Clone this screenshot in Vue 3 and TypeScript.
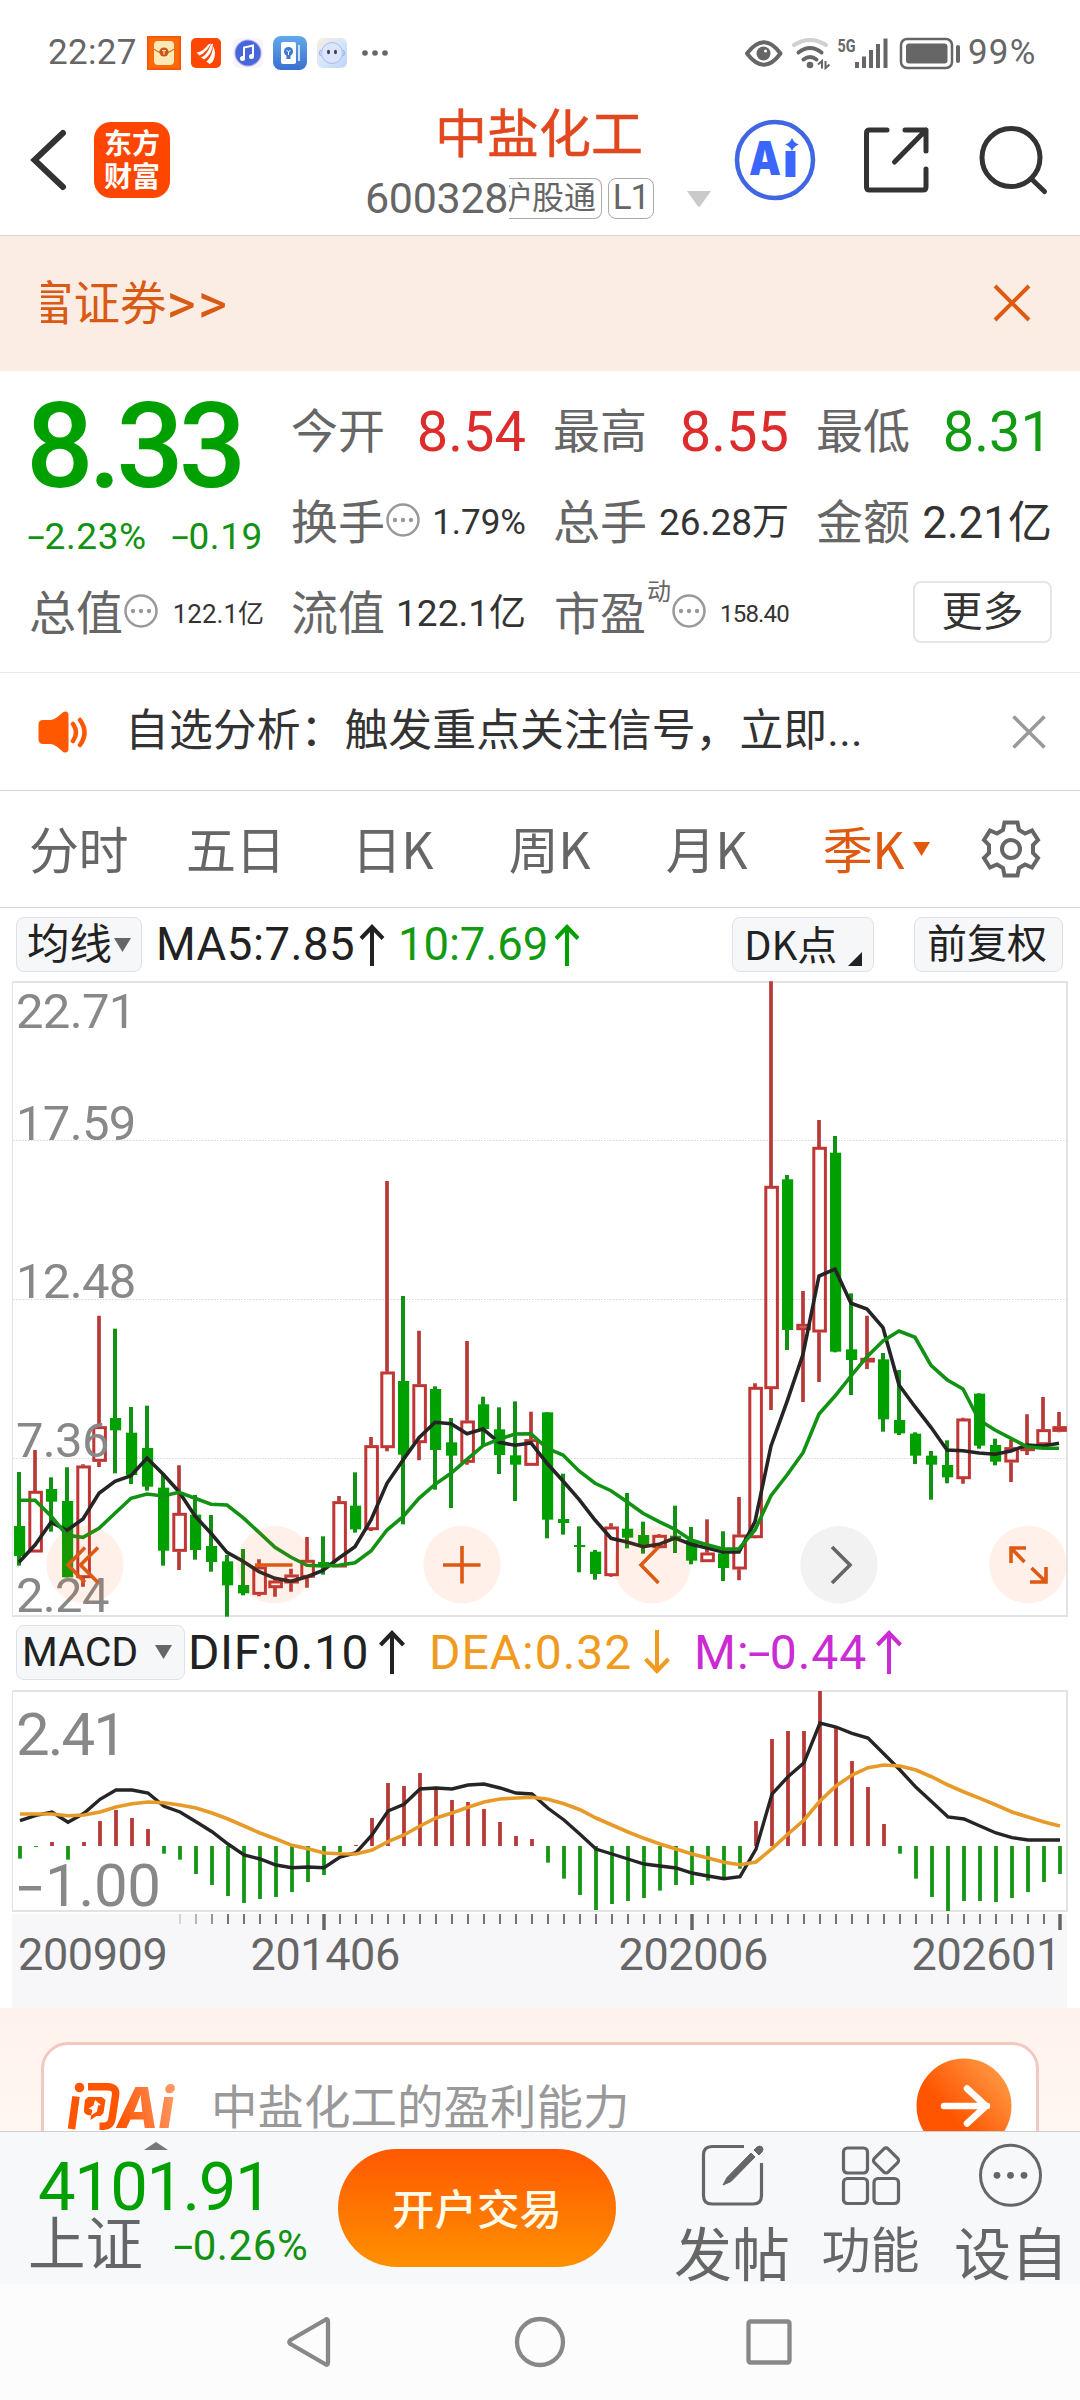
<script setup lang="ts">
type Candle = ['r' | 'g', number, number, number, number]

// colour, high, body top, body bottom, low (thirds of a pixel below the label band)
const candles: Candle[] = [
  ['g', 846, 1008, 1098, 1127], ['r', 780, 903, 1087, 1087], ['g', 862, 897, 935, 1025], ['g', 832, 933, 1162, 1162],
  ['r', 823, 827, 1164, 1190], ['r', 377, 709, 815, 831], ['g', 416, 684, 721, 850], ['g', 651, 728, 855, 882],
  ['g', 647, 774, 890, 902], ['g', 850, 893, 1082, 1127], ['r', 826, 969, 1085, 1140], ['g', 915, 974, 1080, 1109],
  ['g', 975, 1068, 1116, 1145], ['g', 1095, 1114, 1186, 1280], ['g', 1077, 1185, 1210, 1216], ['r', 1108, 1130, 1214, 1219],
  ['r', 1165, 1172, 1194, 1220], ['r', 1136, 1154, 1180, 1205], ['r', 1041, 1110, 1163, 1193], ['g', 1039, 1116, 1130, 1154],
  ['r', 918, 934, 1132, 1132], ['g', 847, 947, 1018, 1028], ['r', 741, 766, 1020, 1023], ['r', -27, 545, 774, 784],
  ['g', 318, 573, 794, 1003], ['r', 422, 583, 759, 811], ['g', 589, 597, 780, 899], ['g', 684, 757, 797, 954],
  ['r', 453, 692, 818, 824], ['g', 620, 643, 717, 765], ['g', 652, 718, 795, 852], ['g', 634, 796, 824, 933],
  ['r', 665, 748, 827, 827], ['g', 667, 667, 989, 1045], ['g', 851, 987, 999, 1034], ['g', 1009, 1065, 1071, 1147],
  ['g', 1080, 1085, 1152, 1169], ['r', 1000, 1010, 1158, 1160], ['g', 909, 1016, 1043, 1075], ['g', 995, 1035, 1065, 1091],
  ['r', 1033, 1035, 1074, 1075], ['g', 947, 1037, 1044, 1089], ['g', 1011, 1050, 1112, 1123], ['r', 988, 1088, 1116, 1116],
  ['g', 1024, 1090, 1134, 1173], ['r', 921, 1034, 1138, 1171], ['r', 580, 591, 1044, 1045], ['r', -626, -12, 597, 660],
  ['g', -45, -32, 420, 480], ['r', 303, 402, 420, 636], ['r', -210, -129, 427, 576], ['g', -162, -112, 485, 487],
  ['g', 310, 478, 510, 615], ['r', 377, 504, 517, 537], ['g', 489, 508, 688, 725], ['g', 540, 690, 730, 735],
  ['g', 727, 731, 797, 822], ['g', 783, 797, 824, 929], ['g', 751, 825, 862, 880], ['r', 683, 686, 867, 881],
  ['g', 610, 611, 767, 776], ['g', 746, 765, 815, 826], ['r', 750, 772, 817, 876], ['r', 673, 772, 783, 795],
  ['r', 621, 718, 765, 768], ['r', 666, 709, 725, 727],
]
const ma5 = [1117, 1065, 997, 1021, 987, 910, 874, 857, 804, 852, 905, 978, 1030, 1087, 1114, 1145, 1165, 1174, 1160, 1141, 1104, 1070, 990, 880, 810, 743, 697, 701, 731, 717, 757, 766, 759, 820, 873, 928, 990, 1045, 1056, 1070, 1063, 1044, 1063, 1074, 1086, 1086, 995, 768, 635, 493, 258, 237, 340, 357, 413, 585, 650, 712, 780, 782, 789, 793, 783, 765, 768, 760]
const ma10 = [931, 931, 978, 1036, 1042, 1015, 970, 925, 912, 918, 907, 925, 943, 945, 983, 1027, 1072, 1102, 1126, 1128, 1126, 1118, 1083, 1020, 980, 925, 883, 850, 808, 767, 748, 732, 731, 775, 795, 843, 880, 902, 935, 970, 995, 1018, 1050, 1064, 1077, 1076, 1020, 917, 855, 788, 672, 618, 558, 500, 453, 423, 442, 526, 569, 597, 690, 720, 745, 770, 775, 775]
const hist = [716, 681, 666, 719, 666, 603, 570, 594, 627, 701, 719, 762, 795, 828, 849, 837, 831, 816, 786, 765, 696, 675, 594, 489, 498, 459, 500, 540, 546, 567, 606, 648, 657, 728, 776, 825, 870, 852, 843, 834, 812, 795, 795, 782, 779, 746, 603, 357, 333, 333, 213, 324, 423, 501, 612, 701, 776, 831, 873, 843, 843, 846, 834, 816, 786, 762]
const dif = [602, 586, 576, 607, 580, 538, 510, 510, 519, 559, 576, 605, 635, 672, 705, 717, 735, 743, 741, 743, 711, 698, 645, 573, 553, 507, 504, 507, 495, 492, 504, 519, 522, 565, 600, 643, 687, 702, 717, 732, 738, 744, 759, 768, 776, 770, 687, 522, 470, 428, 309, 321, 340, 354, 402, 450, 502, 546, 591, 597, 618, 639, 653, 660, 660, 660]
const dea = [582, 582, 582, 587, 585, 576, 561, 551, 546, 548, 555, 564, 579, 597, 618, 639, 657, 676, 686, 699, 701, 702, 690, 665, 645, 618, 594, 579, 562, 546, 537, 534, 532, 538, 551, 569, 594, 615, 636, 655, 672, 687, 702, 714, 727, 734, 726, 686, 642, 600, 543, 498, 465, 443, 435, 438, 450, 471, 495, 516, 535, 555, 576, 591, 606, 618]

const STEP = 16
const ky = (v: number) => 210 + v / 3
const my = (v: number) => v / 3 - 70
const line = (vals: number[], x0: number, y: (v: number) => number) =>
  vals.map((v, i) => `${x0 + i * STEP},${y(v).toFixed(1)}`).join(' ')
const ticks = Array.from({ length: 56 }, (_, k) => {
  const i = k + 10
  return { x: 20 + i * STEP, major: i === 19 || i === 42 || i === 65, o: i === 10 ? 0.25 : i === 11 ? 0.5 : i === 12 ? 0.75 : 1 }
})
const priceLabels = [
  { t: '22.71', y: 47.5 }, { t: '17.59', y: 159.5 }, { t: '12.48', y: 317.5 }, { t: '7.36', y: 477 }, { t: '2.24', y: 632 },
]
const tabs = ['分时', '五日', '日K', '周K', '月K']
</script>

<template>
  <div class="phone">
    <div class="status">
      <span class="clock">22:27</span>
      <svg class="s1" width="34" height="34" viewBox="0 0 34 34"><rect width="34" height="34" fill="#f7560b" /><rect x="2" y="2" width="30" height="30" fill="#fb6a08" /><rect x="7" y="5" width="20" height="24" rx="4" fill="#fde9b8" /><path d="M7 13q10 8 20 0" fill="none" stroke="#dd7c2c" stroke-width="1.6" /><circle cx="17" cy="16" r="4.6" fill="#c8571c" /><path d="M15 14.500h4M17 14.500v4" stroke="#fde9b8" stroke-width="1.2" /></svg>
      <svg class="s2" width="30" height="30" viewBox="0 0 30 30"><rect width="30" height="30" rx="5" fill="#ff4704" /><path d="M5.500 14.500C11 14 14 10 17.500 6.500L20 5.500C17 11 15 14 8.500 17.500zM10 19.500C15 17.500 18 12 19.800 6.500L22 5.500C21.500 12 19 17.500 13 21.500zM15.500 23.500C20 19.500 21.500 14 22 8.500C25 13 24.500 20 21 24.500L18.500 26z" fill="#fff" /></svg>
      <svg class="s3" width="30" height="30" viewBox="0 0 30 30"><rect width="30" height="30" rx="6" fill="#f7f5fc" /><circle cx="15" cy="15" r="13.500" fill="#b9a0f2" /><circle cx="15" cy="15" r="12.500" fill="#4567d8" /><path d="M11 20V9.500l9-2V18" fill="none" stroke="#fff" stroke-width="2" /><circle cx="9.500" cy="20.500" r="2.500" fill="#fff" /><circle cx="18.500" cy="18.500" r="2.500" fill="#fff" /></svg>
      <svg class="s4" width="34" height="34" viewBox="0 0 34 34"><defs><linearGradient id="cardBlue" x2="0" y2="1"><stop stop-color="#63a9ea" /><stop offset="1" stop-color="#3a6fd0" /></linearGradient></defs><rect width="34" height="34" rx="8" fill="url(#cardBlue)" /><rect x="8" y="6" width="15" height="22" rx="2" fill="#fff" /><rect x="25" y="9" width="2" height="16" fill="#cfe2fa" /><circle cx="15.500" cy="15.500" r="4.600" fill="#3f79cf" /><rect x="13.500" y="19" width="4" height="4" fill="#3f79cf" /><path d="M13.500 14l2 2 2-2M15.500 16v3" fill="none" stroke="#fff" stroke-width="1" /></svg>
      <svg class="s5" width="30" height="30" viewBox="0 0 30 30"><defs><linearGradient id="face" x2="1" y2="1"><stop stop-color="#fbeedd" /><stop offset=".5" stop-color="#d7e6fa" /><stop offset="1" stop-color="#bcd3fa" /></linearGradient></defs><rect width="30" height="30" rx="6" fill="url(#face)" /><circle cx="15" cy="15" r="10.500" fill="#dce6fb" stroke="#a9bdee" /><path d="M4 12q-3 3 0 6M26 12q3 3 0 6" fill="none" stroke="#9fbdf3" stroke-width="1.5" /><ellipse cx="11.500" cy="14" rx="1.500" ry="2.300" fill="#4d3d50" /><ellipse cx="18.500" cy="14" rx="1.500" ry="2.300" fill="#4d3d50" /></svg>
      <svg class="dots" width="28" height="8" viewBox="0 0 28 8" fill="#666"><circle cx="4" cy="4" r="2.800" /><circle cx="14" cy="4" r="2.800" /><circle cx="24" cy="4" r="2.800" /></svg>
      <svg class="sys" width="220" height="36" viewBox="744 34 220 36" fill="none" stroke="#666">
        <path d="M747 52.500Q764 30 780.500 52.500Q764 75 747 52.500Z" stroke-width="4" stroke-linejoin="round" />
        <circle cx="763.500" cy="52.500" r="7" fill="#666" stroke="none" /><circle cx="765.500" cy="50" r="1.500" fill="#fff" stroke="none" />
        <path d="M794 44Q810 34 826 44" stroke="#d0d0d0" stroke-width="4" stroke-linecap="round" />
        <path d="M798.500 51.500Q810 42.500 821.500 51.500" stroke-width="4" stroke-linecap="round" />
        <path d="M803.500 58.500Q810 53.500 816.500 58.500" stroke-width="4" stroke-linecap="round" />
        <circle cx="810" cy="64" r="3.300" fill="#666" stroke="none" />
        <path d="M818 63.500l4-3.500v7.500M825.500 60v7l4-3.500" stroke-width="2" />
        <text x="837.500" y="51" textLength="18" lengthAdjust="spacingAndGlyphs" class="g5">5G</text>
        <path d="M857 61v6M864 55.500v11.500M871 49v18M878 43v24M885.500 37.500v29.500" stroke-width="4" />
        <rect x="901" y="38" width="51" height="29" rx="6" stroke-width="2.500" /><rect x="906" y="42.500" width="41.500" height="20" rx="3" fill="#666" stroke="none" />
        <path d="M958 46v14" stroke-width="4" stroke-linecap="round" />
      </svg>
      <span class="pct">99%</span>
    </div>

    <header class="head">
      <svg class="back" width="42" height="66" viewBox="28 127 42 66"><path d="M63 133L34.500 160L63 187" fill="none" stroke="#333" stroke-width="6" stroke-linecap="round" /></svg>
      <div class="logo"><span>东方</span><span>财富</span></div>
      <div class="title-col">
        <div class="title">中盐化工</div>
        <div class="sub">
          <span class="code">600328</span>
          <span class="badge hgt"><i>沪股通</i></span>
          <span class="badge l1">L1</span>
          <svg class="tri" width="24" height="16" viewBox="0 0 24 16"><path d="M0 0h24L13 15.500h-2z" fill="#cacaca" /></svg>
        </div>
      </div>
      <svg width="82" height="82" viewBox="734 119 82 82"><circle cx="775" cy="160" r="38" fill="#fff" stroke="#4166e4" stroke-width="4.500" /><text class="ait" x="749" y="175" textLength="32" lengthAdjust="spacingAndGlyphs">A</text><text class="ait" x="783" y="177" textLength="15" lengthAdjust="spacingAndGlyphs">ı</text><path d="M792 138q2 5 7 6.500-5 1.500-7 6.500-2-5-7-6.500 5-1.500 7-6.500z" fill="#3a66fb" /></svg>
      <svg class="share" width="72" height="72" viewBox="861 124 72 72" fill="none" stroke="#333" stroke-width="5" stroke-linecap="round" stroke-linejoin="round"><path d="M887 130H869.500Q866.500 130 866.500 133V187Q866.500 190 869.500 190H923Q926 190 926 187V169M905 130h21v21M926 130L894.500 162" /></svg>
      <svg class="search" width="72" height="72" viewBox="977 123 72 72" fill="none" stroke="#333" stroke-width="5" stroke-linecap="round"><circle cx="1011" cy="156.500" r="29" /><path d="M1031.500 178l13 12.500" /></svg>
    </header>

    <div class="banner">
      <div class="banner-clip"><span>富证券</span><b>&gt;&gt;</b></div>
      <svg width="38" height="38" viewBox="0 0 38 38"><path d="M2 2l34 34M36 2L2 36" stroke="#de5a10" stroke-width="4" /></svg>
    </div>

    <section class="quote">
      <div class="price"><div class="big">8.33</div><div class="chg"><span><i class="dash">-</i>2.23%</span><span class="r"><i class="dash">-</i>0.19</span></div></div>
      <div class="cell"><span>今开</span><b class="v56 red">8.54</b></div>
      <div class="cell"><span>最高</span><b class="v56 red">8.55</b></div>
      <div class="cell"><span>最低</span><b class="v56 grn">8.31</b></div>
      <div class="cell"><span>换手</span><svg class="info" width="34" height="34" viewBox="0 0 34 34"><circle cx="17" cy="17" r="15.500" fill="none" stroke="#999" stroke-width="2.500" /><g fill="#999"><circle cx="9" cy="17" r="2.200" /><circle cx="17" cy="17" r="2.200" /><circle cx="25" cy="17" r="2.200" /></g></svg><b class="v35">1.79%</b></div>
      <div class="cell"><span>总手</span><b class="v37">26.28万</b></div>
      <div class="cell"><span>金额</span><b class="v44">2.21亿</b></div>
      <div class="cell"><span>总值</span><svg class="info" width="34" height="34" viewBox="0 0 34 34"><circle cx="17" cy="17" r="15.500" fill="none" stroke="#999" stroke-width="2.500" /><g fill="#999"><circle cx="9" cy="17" r="2.200" /><circle cx="17" cy="17" r="2.200" /><circle cx="25" cy="17" r="2.200" /></g></svg><b class="v26">122.1亿</b></div>
      <div class="cell"><span>流值</span><b class="v37">122.1亿</b></div>
      <div class="cell"><span class="pe">市盈</span><em>动</em><svg class="info" width="34" height="34" viewBox="0 0 34 34"><circle cx="17" cy="17" r="15.500" fill="none" stroke="#999" stroke-width="2.500" /><g fill="#999"><circle cx="9" cy="17" r="2.200" /><circle cx="17" cy="17" r="2.200" /><circle cx="25" cy="17" r="2.200" /></g></svg><b class="v24">158.40</b></div>
      <div class="cell"><button class="more">更多</button></div>
    </section>

    <div class="notice">
      <svg width="52" height="44" viewBox="36 708 52 44"><path d="M43 718h8q5-1 11-7 2-2 4-1.500 2.500.5 2.500 4v33q0 3.500-2.500 4-2 .5-4-1.500-6-6-11-7h-8q-4.500 0-4.500-5v-14q0-5 4.500-5z" fill="#ff5800" /><path d="M73 722q6 8.500 0 17M80 718q9 12.500 0 25" fill="none" stroke="#ff5800" stroke-width="4.500" stroke-linecap="round" /></svg>
      <span>自选分析：触发重点关注信号，立即<u>...</u></span>
      <svg class="nx" width="34" height="34" viewBox="0 0 34 34"><path d="M1.500 1.500l31 31M32.500 1.500l-31 31" stroke="#999" stroke-width="3.500" /></svg>
    </div>

    <nav class="tabs">
      <span v-for="t in tabs" :key="t" class="tab">{{ t }}</span>
      <span class="tab on">季K</span>
      <svg class="tabtri" width="17" height="14" viewBox="0 0 17 14"><path d="M0 0h17L8.500 14z" fill="#e4560a" /></svg>
      <svg class="gear" width="60" height="60" viewBox="-30 -30 60 60" fill="none" stroke="#666" stroke-width="4" stroke-linejoin="miter"><path d="M-6.500-26.500h13l1.500 7.500 6 3.500 7-3 6 9.500-5 5v8l5 5-6 9.500-7-3-6 3.500-1.500 7.500h-13l-1.500-7.500-6-3.500-7 3-6-9.500 5-5v-8l-5-5 6-9.500 7 3 6-3.500z" /><circle r="9" /></svg>
    </nav>

    <div class="ind">
      <div class="btn b1"><span>均线</span><svg width="17" height="14" viewBox="0 0 17 14"><path d="M0 0h17L8.500 14z" fill="#666" /></svg></div>
      <span class="n m5">MA5:7.85</span>
      <svg class="a1" width="26" height="42" viewBox="0 0 26 42"><path d="M13 42V3M2 14.500L13 3l11 11.500" /></svg>
      <span class="n m10">10:7.69</span>
      <svg class="a2" width="26" height="42" viewBox="0 0 26 42"><path d="M13 42V3M2 14.500L13 3l11 11.500" /></svg>
      <div class="btn b2"><span>DK点</span><svg width="14" height="14" viewBox="0 0 14 14"><path d="M14 0v14H0z" fill="#222" /></svg></div>
      <div class="btn b3">前复权</div>
    </div>

    <svg class="chart" width="1080" height="640" viewBox="0 0 1080 640">
      <path d="M12.500 1V636" stroke="#e3e3e3" stroke-width="1" /><path d="M12 2H1067V636H12" fill="none" stroke="#e3e3e3" stroke-width="2" />
      <path d="M13 160.500H1067M13 319.500H1067M13 478.500H1067" stroke="#d8d8d8" stroke-dasharray="1.500 1.500" />
      <g v-for="(c, i) in candles" :key="i">
        <template v-if="c[0] === 'g'">
          <path :d="`M${19 + i * 16} ${ky(c[1])}V${ky(c[4])}`" stroke="#129212" stroke-width="4" />
          <rect :x="14 + i * 16" :y="ky(c[2])" width="11.200" :height="ky(c[3]) - ky(c[2])" fill="#00a000" />
        </template>
        <template v-else>
          <path :d="`M${19 + i * 16} ${ky(c[1])}V${ky(c[2])}M${19 + i * 16} ${ky(c[3])}V${ky(c[4])}`" stroke="#b83a38" stroke-width="3.700" />
          <rect :x="13.800 + i * 16" :y="ky(c[2]) + 1.300" width="11.600" :height="Math.max(1, ky(c[3]) - ky(c[2]) - 2.600)" fill="none" stroke="#c03634" stroke-width="3" />
        </template>
      </g>
      <polyline :points="line(ma5, 19, ky)" fill="none" stroke="#252525" stroke-width="3.600" />
      <polyline :points="line(ma10, 19, ky)" fill="none" stroke="#129212" stroke-width="3.600" />
      <text v-for="l in priceLabels" :key="l.t" x="16" :y="l.y" class="pl">{{ l.t }}</text>
      <g fill="#ff5a14" fill-opacity=".09"><circle cx="85" cy="584.700" r="38.700" /><circle cx="275" cy="584.700" r="38.700" /><circle cx="462" cy="584.700" r="38.700" /><circle cx="652" cy="584.700" r="38.700" /><path d="M1066 577A38.700 38.700 0 1 0 1066 592z" /></g>
      <circle cx="839" cy="584.700" r="38.700" fill="#f2f2f2" />
      <g fill="none" stroke="#dc5a12" stroke-width="3.600">
        <path d="M85 567.500l-17 17.500 17 17.500M98 567.500l-17.500 17.500 17.500 17.500" /><path d="M255 585h37.500M443 585h37.500M462 566v37.500" /><path d="M658.500 567l-17.500 18 17.500 18" />
        <path d="M1026 568h-15v15M1011 568l13.500 14M1030 602h16v-15M1046 602l-14.500-14" />
      </g>
      <path d="M832 567l18 18-18 18" fill="none" stroke="#666" stroke-width="3.600" />
    </svg>

    <div class="ind ind2">
      <div class="btn b4"><span>MACD</span><svg width="17" height="14" viewBox="0 0 17 14"><path d="M0 0h17L8.500 14z" fill="#666" /></svg></div>
      <span class="n d1">DIF:0.10</span>
      <svg class="c1" width="26" height="44" viewBox="0 0 26 44"><path d="M13 44V3M1.500 15L13 3l11.500 12" /></svg>
      <span class="n d2">DEA:0.32</span>
      <svg class="c2" width="26" height="44" viewBox="0 0 26 44"><path d="M13 0V41M1.500 29L13 41l11.500-12" /></svg>
      <span class="n d3">M:<i class="dash">-</i>0.44</span>
      <svg class="c3" width="26" height="44" viewBox="0 0 26 44"><path d="M13 44V3M1.500 15L13 3l11.500 12" /></svg>
    </div>

    <svg class="macd" width="1080" height="318" viewBox="0 0 1080 318">
      <defs><clipPath id="plot"><rect x="12" y="0" width="1056" height="222" /></clipPath></defs>
      <rect x="12" y="224" width="1055" height="94" fill="#f7f7f9" />
      <path d="M12.500 0V222" stroke="#e3e3e3" stroke-width="1" /><path d="M12 1H1067V221H12" fill="none" stroke="#e3e3e3" stroke-width="2" />
      <g clip-path="url(#plot)">
        <path v-for="(h, i) in hist" :key="i" :d="`M${20 + i * 16} 156V${my(h)}`" :stroke="h < 678 ? '#b83a38' : '#169616'" stroke-width="3.800" />
        <polyline :points="line(dif, 20, my)" fill="none" stroke="#252525" stroke-width="3.400" />
        <polyline :points="line(dea, 20, my)" fill="none" stroke="#e89a28" stroke-width="3.600" />
      </g>
      <text x="16" y="65" class="ml" textLength="111" lengthAdjust="spacing">2.41</text>
      <rect x="19" y="196" width="22" height="4.500" fill="#888" />
      <text x="45" y="216" class="ml" textLength="116" lengthAdjust="spacing">1.00</text>
      <path v-for="t in ticks" :key="t.x" :d="`M${t.x} 224v${t.major ? 16 : 10}`" stroke="#666" :stroke-width="t.major ? 3.500 : 1.800" :opacity="t.o" />
      <g class="dt"><text x="18" y="280">200909</text><text x="250.500" y="280">201406</text><text x="618.500" y="280">202006</text><text x="911.500" y="280">202601</text></g>
    </svg>

    <section class="ask">
      <div class="card">
        <svg class="asklogo" width="116" height="50" viewBox="66 2082 116 50">
          <defs><linearGradient id="ai" x1="0" x2="1" y1=".6" y2=".3"><stop stop-color="#ff5200" /><stop offset="1" stop-color="#ff9a66" /></linearGradient></defs>
          <path d="M76 2096.500L71.500 2129M88 2086.800h19.500q9.500 0 8 9l-3.500 23q-1.200 7.500-8.500 7.500h-4" fill="none" stroke="#ff5500" stroke-width="7.500" />
          <circle cx="79.500" cy="2087.500" r="4.800" fill="#ff5500" />
          <path d="M88 2097h14l3.500 3-2 13-3 3h-4l-6 4 .5-4.500q-8-.5-7-6.500l1-9z" fill="#ff5500" />
          <path d="M95 2100l6 5-3 .5-1 6-6 4 1.500-5.500-4-1.500 5-3z" fill="#fff" />
          <text x="117" y="2127.500" class="aitext" textLength="57" lengthAdjust="spacingAndGlyphs" fill="url(#ai)">Ai</text>
        </svg>
        <span class="q">中盐化工的盈利能力</span>
        <svg class="go" width="96" height="96" viewBox="0 0 96 96"><defs><linearGradient id="go" x1=".2" y1=".7" x2=".9" y2=".1"><stop offset=".2" stop-color="#ff5500" /><stop offset="1" stop-color="#ff9a45" /></linearGradient></defs><circle cx="48" cy="48" r="47.500" fill="url(#go)" /><path d="M28 48h43M51 30.500L70 48 51 65.500" fill="none" stroke="#fff" stroke-width="6.500" stroke-linecap="round" stroke-linejoin="round" /></svg>
      </div>
    </section>

    <footer class="foot">
      <div class="idx">
        <svg width="24" height="8" viewBox="0 0 24 8"><path d="M12 0l12 8H0z" fill="#77777b" /></svg>
        <div class="iv">4101.91</div>
        <div class="ir"><span>上证</span><b><i class="dash">-</i>0.26%</b></div>
      </div>
      <button class="open">开户交易</button>
      <div class="act w1"><svg width="64" height="64" viewBox="700 2143 64 64" fill="none" stroke="#666"><path d="M744 2146.500H712Q703.500 2146.500 703.500 2155V2195.500Q703.500 2204 712 2204H753Q761.500 2204 761.500 2195.500V2163" stroke-width="3.200" /><path d="M751 2153L727 2177.500l-4 7.500 8-3.500 24-24.500zM754 2150l3-3q3-2 5 0 2 2 0 5l-3 3z" fill="#666" stroke-width="1" /></svg><span>发帖</span></div>
      <div class="act w2"><svg width="64" height="64" viewBox="840 2143 64 64" fill="none" stroke="#666" stroke-width="3.200"><rect x="844.500" y="2148" width="24" height="25" rx="4" /><rect x="844.500" y="2178.500" width="24" height="25" rx="4" /><rect x="875" y="2178.500" width="24.500" height="25" rx="4" /><rect x="877.200" y="2150.700" width="19.500" height="19.500" rx="3" transform="rotate(45 887 2160.500)" /></svg><span>功能</span></div>
      <div class="act w3"><svg width="66" height="64" viewBox="978 2143 66 64"><circle cx="1010.500" cy="2175.300" r="30" fill="none" stroke="#666" stroke-width="3" /><g fill="#666"><circle cx="997" cy="2175.300" r="3.400" /><circle cx="1010.500" cy="2175.300" r="3.400" /><circle cx="1024" cy="2175.300" r="3.400" /></g></svg><span>设自</span></div>
    </footer>

    <svg class="navbar" width="1080" height="116" viewBox="0 2284 1080 116" fill="none" stroke="#888" stroke-width="4.300" stroke-linejoin="round"><path d="M328 2321.500V2362.500Q328 2366 325 2364L290.500 2344Q288 2342 290.500 2340L325 2320Q328 2318 328 2321.500Z" /><circle cx="540" cy="2342" r="23" /><rect x="748.500" y="2321.500" width="41" height="41" rx="2" /></svg>
  </div>
</template>

<style>
body { margin: 0; background: #fff; }
</style>

<style scoped>
.phone { width: 1080px; height: 2400px; overflow: hidden; background: #fff; font-family: Roboto, "Noto Sans CJK SC", sans-serif; color: #333; display: flex; flex-direction: column; }
.phone > * { flex: none; box-sizing: border-box; }
svg { display: block; flex: none; }
b, i, em, u { font-weight: 400; font-style: normal; text-decoration: none; }
button { font-family: inherit; padding: 0; }
.dash { display: inline-block; width: .42em; text-align: center; transform: scaleX(1.7); }

.status { height: 105px; display: flex; align-items: center; color: #666; font-size: 35px; line-height: 40px; }
.clock { margin-left: 48px; width: 99px; letter-spacing: .3px; }
.s2 { margin-left: 10px; } .s3 { margin-left: 12px; } .s4 { margin-left: 10px; } .s5 { margin-left: 10px; }
.dots { margin-left: 14px; }
.sys { margin-left: 355px; }
.g5 { font: 700 19px Roboto, sans-serif; fill: #666; stroke: none; }
.pct { margin-left: 4px; letter-spacing: 1.2px; }

.head { height: 131px; border-bottom: 1px solid #d5d5d8; display: flex; align-items: center; padding-bottom: 20px; }
.back { margin-left: 28px; }
.logo { margin-left: 24px; width: 76px; height: 76px; border-radius: 17px; background: #ff4600; color: #fff; display: flex; flex-direction: column; align-items: center; justify-content: center; font: 700 28px/33px "Noto Sans CJK SC", sans-serif; padding-bottom: 3px; box-sizing: border-box; }
.title-col { align-self: flex-start; margin-left: 195px; width: 369px; }
.title { padding-left: 70px; padding-top: 3px; font-size: 52px; line-height: 56px; color: #e2481f; -webkit-text-stroke: .5px #e2481f; }
.sub { display: flex; align-items: center; height: 41px; margin-top: 14px; color: #666; }
.code { width: 144px; font-size: 43px; line-height: 41px; letter-spacing: -.3px; }
.badge { box-sizing: border-box; height: 41px; border: 1.5px solid #aaa; border-radius: 8px; overflow: hidden; font-size: 32px; line-height: 38px; white-space: nowrap; }
.hgt { width: 93px; border-left: 0; border-radius: 0 8px 8px 0; }
.hgt i { display: block; margin-left: -9px; width: 96px; }
.l1 { margin-left: 6px; width: 46px; font-size: 35px; text-align: center; letter-spacing: -1px; }
.tri { margin-left: 33px; }
.ait { font: 900 47px Inter, sans-serif; fill: #3a66fb; }
.share { margin-left: 45px; } .search { margin-left: 44px; }

.banner { height: 135px; background: #fcede4; display: flex; align-items: center; justify-content: space-between; padding: 0 49px 0 41px; color: #d95a12; font-size: 46.500px; line-height: 60px; }
.banner svg { margin-top: -2px; }
.banner-clip { overflow: hidden; display: flex; width: 300px; }
.banner-clip span { margin-left: -14px; }
.banner-clip b { letter-spacing: 2px; font-size: 56px; }

.quote { height: 302px; border-bottom: 1px solid #eaeaea; display: grid; grid-template: repeat(3, 91px) / 234px 234px 235px 235px; column-gap: 28px; padding: 15px 0 0 29px; }
.price { grid-row: 1 / 3; color: #00a000; }
.big { font-size: 119px; line-height: 88px; font-weight: 500; letter-spacing: -5.200px; margin: 17px 0 0 -3px; }
.chg { display: flex; justify-content: space-between; font-size: 37px; line-height: 40px; margin-top: 26px; color: #129212; white-space: nowrap; letter-spacing: .6px; }
.cell { display: flex; align-items: center; white-space: nowrap; }
.cell span { font-size: 47px; line-height: 60px; color: #666; }
.cell b { margin-left: auto; line-height: 60px; margin-right: -1px; }
.info { margin: -6px 0 0 1px; }
.v56 { font-size: 56px; } .v35 { font-size: 35px; } .v37 { font-size: 37px; } .v44 { font-size: 44px; } .v26 { font-size: 26px; } .v24 { font-size: 24px; letter-spacing: -.8px; }
.red { color: #dc2c2c; } .grn { color: #129a12; }
.cell .pe { font-size: 46px; margin-left: 1px; }
.cell em { font-size: 24px; line-height: 30px; margin: -44px 0 0 1px; color: #666; }
.more { margin-left: auto; width: 139px; height: 62px; background: #fff; border: 2px solid #e6e6e6; border-radius: 8px; font-size: 41px; line-height: 54px; color: #333; margin-right: -1px; margin-top: -4px; }

.notice { height: 118px; border-bottom: 1px solid #d5d5d8; display: flex; align-items: center; padding-left: 36px; }
.notice span { margin: -2px 0 0 37px; width: 887px; font-size: 43.900px; line-height: 60px; white-space: nowrap; }
.notice u { letter-spacing: .3px; }

.tabs { height: 117px; border-bottom: 1px solid #d5d5d8; display: flex; align-items: center; color: #666; font: 50px/60px "Noto Sans CJK SC", sans-serif; }
.tab { width: 157px; text-align: center; margin-top: -4px; }
.tabs .tab { letter-spacing: -.4px; }
.on { color: #de5a10; }
.tabtri { margin-left: -29px; }
.gear { margin-left: 51px; }

.ind { height: 72px; display: flex; align-items: center; color: #222; font-size: 45.500px; line-height: 55px; white-space: nowrap; padding-top: 1px; }
.btn { box-sizing: border-box; height: 55px; border: 1.500px solid #dfe1e4; border-radius: 8px; background: #f6f7f9; display: flex; align-items: center; line-height: 52px; }
.b1 { margin-left: 16px; width: 126px; padding-left: 10px; font-size: 42.500px; } .b1 svg { margin-left: 2px; }
.m5 { margin-left: 14px; width: 203px; letter-spacing: .5px; }
.ind > svg { fill: none; stroke: currentColor; stroke-width: 4; }
.m10 { margin-left: 13px; width: 157px; letter-spacing: -.1px; color: #129a12; }
.ind .a2 { margin-left: -1px; color: #00a000; }
.b2 { margin-left: 152px; width: 142px; padding-left: 11px; font: 40px/52px "Noto Sans CJK SC", sans-serif; } .b2 span { margin-top: -3px; } .b2 svg { margin: 28px 0 0 11px; }
.b3 { margin-left: 40px; width: 149px; justify-content: center; font-size: 40px; padding-right: 3px; }
.chart { height: 640px; }
.pl { font-size: 49px; fill: #888; letter-spacing: -.7px; }

.ind2 { height: 70px; font-size: 48px; padding: 0 0 6px; }
.b4 { margin-left: 16px; width: 169px; padding-left: 5px; font-size: 41px; } .b4 svg { margin-left: 17px; }
.d1 { margin-left: 3px; width: 191px; letter-spacing: .6px; }
.d2 { margin-left: 24px; width: 215px; letter-spacing: 1px; color: #f09a1e; } .c2 { color: #f09a1e; }
.d3 { margin-left: 24px; width: 182px; letter-spacing: 1px; color: #cb2bd4; } .c3 { color: #cb2bd4; }
.ml { font-size: 60px; fill: #888; }
.dt { font-size: 45px; fill: #666; letter-spacing: -.4px; }

.ask { height: 123px; overflow: hidden; background: linear-gradient(#fff2ed, #fff7f2); padding: 34px 41px 0; }
.card { box-sizing: border-box; height: 180px; border: 3px solid #f3c8c0; border-radius: 27px; background: #fff; display: flex; align-items: flex-start; }
.asklogo { margin: 37px 0 0 22px; }
.aitext { font: italic 800 57px Inter, sans-serif; }
.q { margin: 30px 0 0 29px; font-size: 46.500px; line-height: 66px; color: #999; width: 705px; }
.go { margin-top: 13px; }

.foot { height: 153px; overflow: hidden; border-top: 1px solid #cfcfd2; background: #f7f8fa; display: flex; align-items: flex-start; color: #666; white-space: nowrap; }
.idx { width: 338px; }
.idx svg { margin: 10px 0 0 144px; }
.iv { margin: 7px 0 0 38px; font-size: 67px; line-height: 60px; letter-spacing: -1.500px; color: #00a000; }
.ir { display: flex; align-items: center; margin: -3px 0 0 28px; font-size: 57.500px; line-height: 64px; }
.ir b { font-size: 42px; color: #129212; margin-left: 32px; letter-spacing: .6px; }
.open { margin-top: 17px; width: 278px; height: 118px; border: 0; border-radius: 59px; background: linear-gradient(#ff5800, #ff9000); color: #fffbe8; font-size: 42.500px; font-weight: 500; padding-bottom: 3px; }
.act { display: flex; flex-direction: column; align-items: center; padding-top: 11px; line-height: 70px; }
.act span { margin-top: 14px; }
.w1 { margin-left: 58px; width: 116px; font-size: 58px; } .w2 { margin-left: 31px; width: 99px; font-size: 49px; } .w3 { margin-left: 33px; width: 116px; font-size: 57px; }
.w2 span { margin-top: 10px; }
.navbar { background: #fcfcfc; }
</style>
